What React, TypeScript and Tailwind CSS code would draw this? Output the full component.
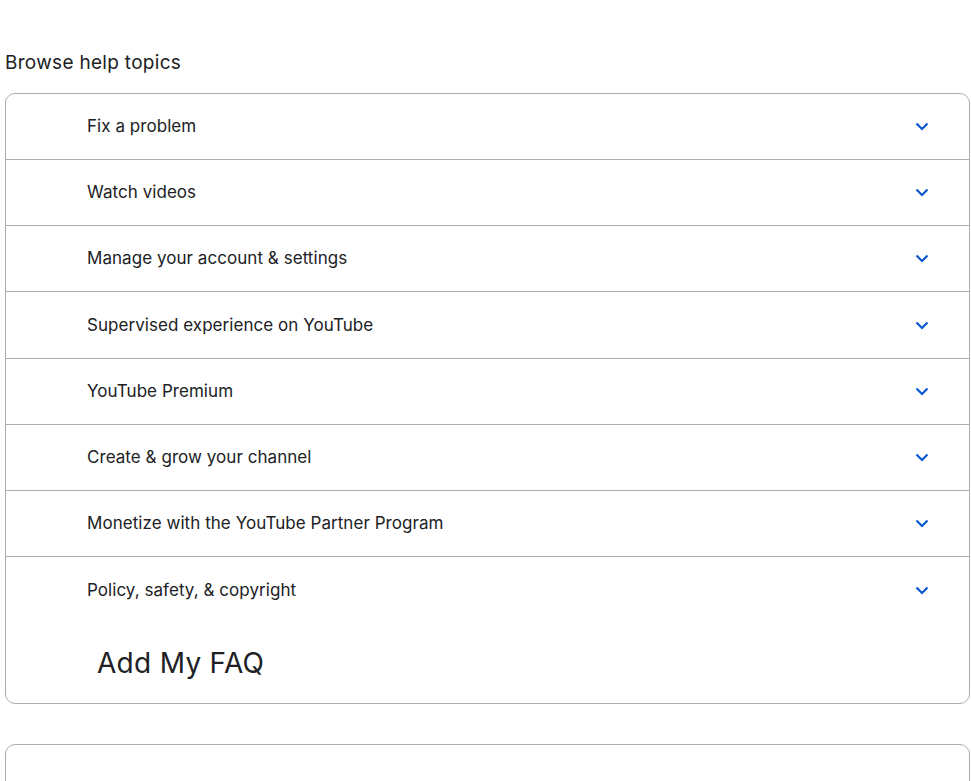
import React from "react";

const topics = [
  "Fix a problem",
  "Watch videos",
  "Manage your account & settings",
  "Supervised experience on YouTube",
  "YouTube Premium",
  "Create & grow your channel",
  "Monetize with the YouTube Partner Program",
  "Policy, safety, & copyright",
];

function Chevron() {
  return (
    <svg width="14" height="9" viewBox="0 0 14 9" aria-hidden="true">
      <path d="M1.5 1.5 7 7l5.5-5.5" fill="none" stroke="#0b57d0" strokeWidth="2.2" />
    </svg>
  );
}

export default function App() {
  return (
    <div className="min-h-[781px] bg-white text-[#202124]" style={{ fontFamily: "Inter, 'Open Sans', sans-serif" }}>
      <div className="pl-[5px] pr-[1px] pt-[51px]">
        <h2 className="text-[19px] leading-[24px] mb-[18px] tracking-[0.3px]">Browse help topics</h2>

        <div className="border border-[#aeaeae] rounded-[10px]">
          {topics.map((t, i) => (
            <div
              key={t}
              className={`flex items-center pl-[81px] pr-[40px] ${i === 3 ? "h-[67px]" : "h-[66px]"} ${i < topics.length - 1 ? "border-b border-[#aeaeae]" : ""}`}
            >
              <span className="flex-1 text-[17px] leading-[22px] tracking-[0.05px] -mt-[1px]">{t}</span>
              <Chevron />
            </div>
          ))}
          <div className="pl-[91px] pt-[20px] pb-[20px] text-[28px] leading-[40px] tracking-[0.3px]">Add My FAQ</div>
        </div>

        <div className="mt-[40px] h-[60px] border border-[#aeaeae] rounded-[10px]" />
      </div>
    </div>
  );
}
